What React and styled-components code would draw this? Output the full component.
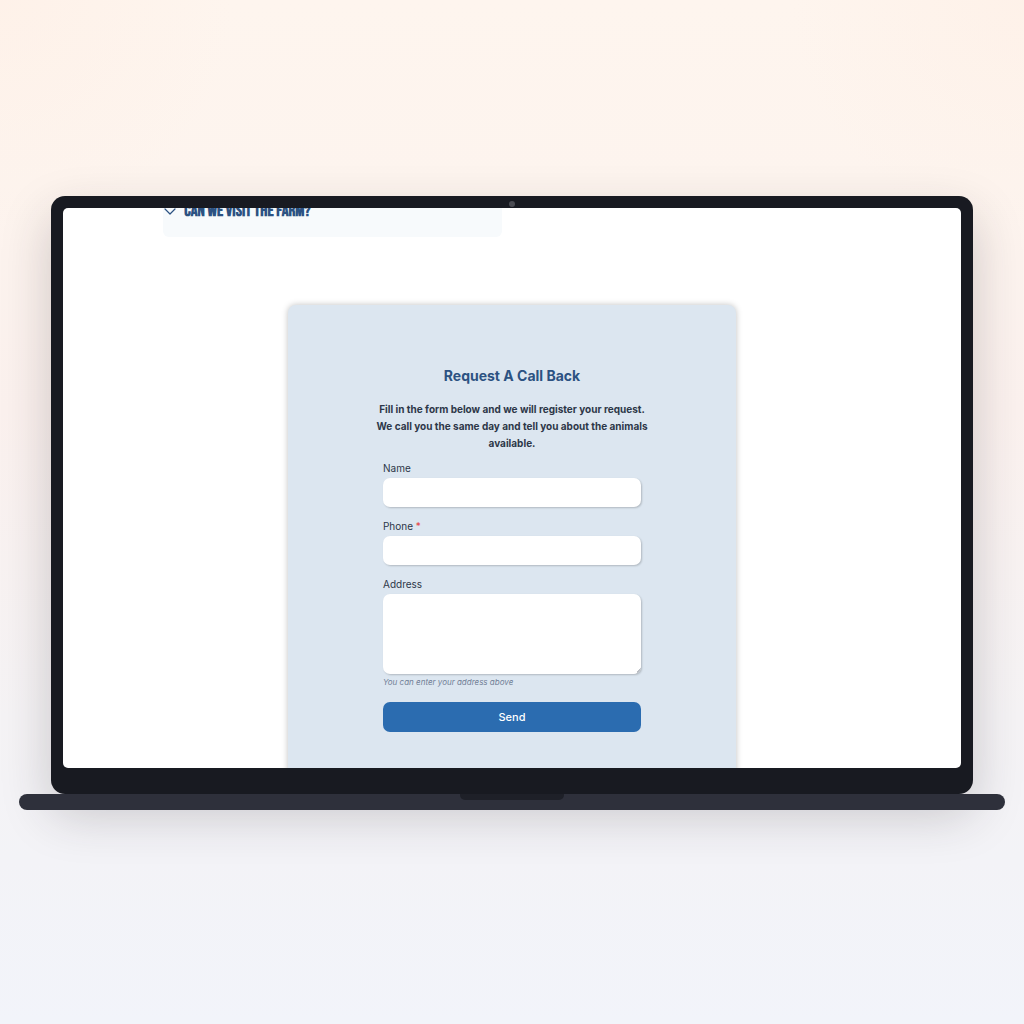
import React, { useState } from "react";
import styled, { createGlobalStyle } from "styled-components";

const GlobalStyle = createGlobalStyle`
  * {
    box-sizing: border-box;
  }

  body {
    margin: 0;
    font-family: Inter, "Liberation Sans", sans-serif;
    color: #2d3748;
  }
`;

const Backdrop = styled.div`
  min-height: 100vh;
  padding-bottom: 18px;
  display: flex;
  flex-direction: column;
  align-items: center;
  justify-content: center;
  background:
    radial-gradient(circle at 0 0, rgba(255, 238, 228, 0.5), transparent 16%),
    radial-gradient(circle at 100% 0, rgba(255, 238, 228, 0.5), transparent 16%),
    linear-gradient(180deg, #fef5ee 0%, #fdf4ee 18%, #fbf1ee 40%, #f5f3f5 70%, #f3f3f7 84%, #f2f4fa 100%);
`;

const Lid = styled.div`
  width: 90%;
  padding: 0 12px 26px;
  background: #181a21;
  border-radius: 14px;
  box-shadow: 0 20px 50px rgba(40, 35, 45, 0.22);
`;

const CameraBar = styled.div`
  height: 12px;
  padding-top: 4px;
  display: flex;
  align-items: center;
  justify-content: center;
`;

const Camera = styled.span`
  width: 6px;
  height: 6px;
  background: #4a4b52;
  border-radius: 50%;
`;

const Screen = styled.div`
  aspect-ratio: 16 / 10;
  overflow: hidden;
  background: #ffffff;
  border-radius: 5px;
`;

const Base = styled.div`
  position: relative;
  width: calc(100% - 38px);
  height: 16px;
  display: flex;
  justify-content: center;
  background: #2e303b;
  border-radius: 8px;
`;

const Notch = styled.span`
  width: 104px;
  height: 6px;
  background: #1e2028;
  border-radius: 0 0 5px 5px;
`;

// the page is scrolled, so the last question is cut by the top edge
const Page = styled.main`
  margin-top: -23px;
  display: flex;
  flex-direction: column;
  align-items: center;
  gap: 68px;
`;

const FaqGrid = styled.section`
  width: 100%;
  padding: 0 100px;
  display: grid;
  grid-template-columns: 1fr 1fr;
  gap: 20px;
`;

const FaqItem = styled.button`
  padding: 16px 1px;
  display: flex;
  align-items: center;
  gap: 8px;
  background: #f7fafc;
  border: 0;
  border-radius: 6px;
  color: #2c5282;
  font-family: "Bebas Neue", "Liberation Sans", sans-serif;
  font-size: 17px;
  font-weight: 700;
  line-height: 20px;
  text-transform: uppercase;
`;

const Card = styled.section`
  width: 50%;
  padding: 61px 84px 60px;
  display: flex;
  flex-direction: column;
  align-items: center;
  background: #dce6f0;
  border-radius: 8px;
  box-shadow: 0 0 6px rgba(0, 0, 0, 0.25);
`;

const Title = styled.h2`
  margin: 0 0 15px;
  color: #2c5282;
  font-size: 14px;
  font-weight: 700;
  line-height: 20px;
`;

const Intro = styled.p`
  margin: 0 0 9px;
  font-size: 10px;
  font-weight: 700;
  line-height: 17px;
  text-align: center;
`;

const Form = styled.form`
  width: 258px;
  display: flex;
  flex-direction: column;
`;

const Field = styled.div`
  margin-bottom: 12px;
  display: flex;
  flex-direction: column;
`;

const Label = styled.label`
  margin-bottom: 2px;
  font-size: 10px;
  line-height: 15px;
`;

const Required = styled.span`
  color: #e53e3e;
`;

const Input = styled.input`
  height: 29px;
  padding: 0 10px;
  background: #ffffff;
  border: 0;
  border-radius: 7px;
  box-shadow: 1px 1px 2px rgba(0, 0, 0, 0.2);
  font: inherit;
  font-size: 10px;
`;

const TextArea = styled(Input)`
  height: 80px;
  padding: 6px 10px;
  resize: vertical;

  &::-webkit-resizer {
    background: linear-gradient(135deg, transparent 80%, #b9bdc3 80%);
    border-radius: 0 0 7px 0;
  }
`;

const Hint = styled.small`
  color: #718096;
  font-size: 8px;
  font-style: italic;
  line-height: 16px;
`;

const SendButton = styled.button`
  height: 30px;
  background: #2b6cb0;
  border: 0;
  border-radius: 7px;
  color: #ffffff;
  font: inherit;
  font-size: 11px;
  font-weight: 500;
`;

const Chevron = () => (
  <svg width="12" height="12" viewBox="0 0 12 12" fill="none" aria-hidden="true">
    <path
      d="M1 4l5 5 5-5"
      stroke="currentColor"
      strokeWidth="1.2"
      strokeLinecap="round"
      strokeLinejoin="round"
    />
  </svg>
);

const CallBackForm = () => {
  const [values, setValues] = useState({ name: "", phone: "", address: "" });

  const onChange = (e) => {
    setValues({ ...values, [e.target.name]: e.target.value });
  };
  const onSubmit = (e) => {
    e.preventDefault();
  };

  return (
    <Form onSubmit={onSubmit}>
      <Field>
        <Label htmlFor="name">Name</Label>
        <Input id="name" name="name" value={values.name} onChange={onChange} />
      </Field>
      <Field>
        <Label htmlFor="phone">
          Phone <Required>*</Required>
        </Label>
        <Input
          id="phone"
          name="phone"
          type="tel"
          required
          value={values.phone}
          onChange={onChange}
        />
      </Field>
      <Field>
        <Label htmlFor="address">Address</Label>
        <TextArea
          as="textarea"
          id="address"
          name="address"
          aria-describedby="address-hint"
          value={values.address}
          onChange={onChange}
        />
        <Hint id="address-hint">You can enter your address above</Hint>
      </Field>
      <SendButton type="submit">Send</SendButton>
    </Form>
  );
};

const App = () => {
  return (
    <>
      <GlobalStyle />
      <Backdrop>
        <Lid>
          <CameraBar>
            <Camera />
          </CameraBar>
          <Screen>
            <Page>
              <FaqGrid>
                <FaqItem type="button">
                  <Chevron />
                  Can we visit the farm?
                </FaqItem>
              </FaqGrid>
              <Card>
                <Title>Request A Call Back</Title>
                <Intro>
                  Fill in the form below and we will register your request. We
                  call you the same day and tell you about the animals
                  available.
                </Intro>
                <CallBackForm />
              </Card>
            </Page>
          </Screen>
        </Lid>
        <Base>
          <Notch />
        </Base>
      </Backdrop>
    </>
  );
};

export default App;
